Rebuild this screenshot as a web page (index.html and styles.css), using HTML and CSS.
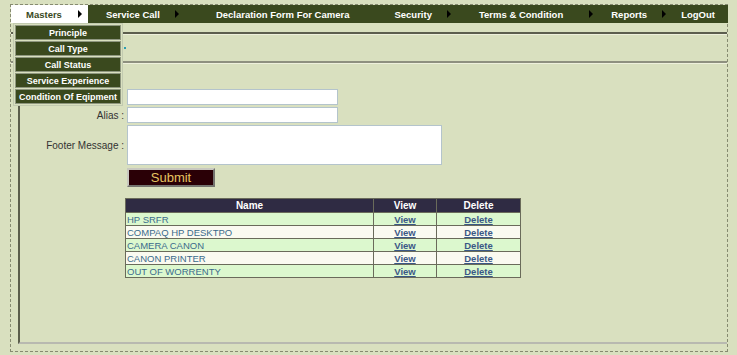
FILE: index.html
```html
<!DOCTYPE html>
<html lang="en">
<head>
  <meta charset="UTF-8" />
  <title>Principle</title>
  <link rel="stylesheet" href="styles.css">
</head>
<body>
  <div class="frame">
    <ul class="menubar">
      <li class="menu-item active">
        <span>Masters</span><span class="arrow"></span>
        <ul class="dropdown">
          <li>Principle</li>
          <li>Call Type</li>
          <li>Call Status</li>
          <li>Service Experience</li>
          <li>Condition Of Eqipment</li>
        </ul>
      </li>
      <li class="menu-item"><span>Service Call</span><span class="arrow"></span></li>
      <li class="menu-item"><span>Declaration Form For Camera</span></li>
      <li class="menu-item"><span>Security</span><span class="arrow"></span></li>
      <li class="menu-item"><span>Terms &amp; Condition</span><span class="arrow"></span></li>
      <li class="menu-item"><span>Reports</span><span class="arrow"></span></li>
      <li class="menu-item"><span>LogOut</span></li>
    </ul>

    <div class="rule rule-dark"></div>
    <div class="crumb"><span class="crumb-dot"></span></div>
    <div class="rule rule-grey"></div>

    <div class="panel">
      <div class="form-row">
        <span class="lbl"></span>
        <input type="text" class="txt" />
      </div>
      <div class="form-row">
        <label class="lbl">Alias :</label>
        <input type="text" class="txt" />
      </div>
      <div class="form-row">
        <label class="lbl">Footer Message :</label>
        <textarea class="area"></textarea>
      </div>
      <div class="form-row">
        <span class="lbl"></span>
        <button class="submit">Submit</button>
      </div>

      <table class="grid">
        <tr><th class="c-name">Name</th><th class="c-view">View</th><th class="c-del">Delete</th></tr>
        <tr class="odd"><td>HP SRFR</td><td class="lnk"><a href="#">View</a></td><td class="lnk"><a href="#">Delete</a></td></tr>
        <tr class="even"><td>COMPAQ HP DESKTPO</td><td class="lnk"><a href="#">View</a></td><td class="lnk"><a href="#">Delete</a></td></tr>
        <tr class="odd"><td>CAMERA CANON</td><td class="lnk"><a href="#">View</a></td><td class="lnk"><a href="#">Delete</a></td></tr>
        <tr class="even"><td>CANON PRINTER</td><td class="lnk"><a href="#">View</a></td><td class="lnk"><a href="#">Delete</a></td></tr>
        <tr class="odd"><td>OUT OF WORRENTY</td><td class="lnk"><a href="#">View</a></td><td class="lnk"><a href="#">Delete</a></td></tr>
      </table>
    </div>
  </div>
</body>
</html>
```

FILE: styles.css
```css
* { box-sizing: border-box; }
body {
  margin: 0;
  padding: 4px 0 0 10px;
  background-color: #d9e0bf;
  font-family: "Liberation Sans", Arial, sans-serif;
  font-size: 10px;
  color: #333;
}
.frame {
  width: 718px;
  height: 348px;
  border: 1px dashed #868a70;
}

/* top menu */
.menubar {
  list-style: none;
  margin: 0;
  padding: 0;
  height: 18px;
  display: flex;
  background-color: #3a491e;
  margin-right: -1px;
}
.menu-item {
  position: relative;
  display: flex;
  align-items: center;
  height: 18px;
  color: #fff;
  font-weight: bold;
  font-size: 9.5px;
}
.menu-item .arrow {
  width: 0;
  height: 0;
  margin-left: 15px;
  border-left: 4px solid #000;
  border-top: 4px solid transparent;
  border-bottom: 4px solid transparent;
}
.menu-item.active {
  width: 77px;
  padding-left: 15px;
  background: #fff;
  color: #3a491e;
}
.menu-item.active .arrow { margin-left: 16px; }
.menu-item:nth-child(2) { margin-left: 18px; }
.menu-item:nth-child(3) { margin-left: 37px; }
.menu-item:nth-child(4) { margin-left: 45px; }
.menu-item:nth-child(5) { margin-left: 28px; }
.menu-item:nth-child(6) { margin-left: 18px; }
.menu-item:nth-child(7) { margin-left: 15px; }
.menu-item:nth-child(6) .arrow { margin-left: 15px; }
.menu-item:nth-child(5) .arrow { margin-left: 26px; }

.dropdown {
  position: absolute;
  top: 18px;
  left: 2px;
  width: 110px;
  margin: 0;
  padding: 1px;
  list-style: none;
  background: #d9e0bf;
  border: 1px solid #c2cab0;
  z-index: 5;
}
.dropdown li {
  height: 15px;
  line-height: 14px;
  margin-bottom: 1px;
  background: #3a491e;
  border: 1px solid #8f9780;
  color: #fff;
  text-align: center;
  font-size: 9px;
  font-weight: bold;
  white-space: nowrap;
}
.dropdown li:last-child { margin-bottom: 0; }

/* separators */
.rule { height: 3px; }
.rule-dark {
  margin-top: 9px;
  border-top: 2px solid #5c5e4e;
  border-bottom: 1px solid #eef0dc;
}
.crumb {
  height: 26px;
  padding: 12px 0 0 113px;
}
.crumb-dot {
  display: block;
  width: 2px;
  height: 2px;
  background: #2a9cb0;
}
.rule-grey {
  border-top: 2px solid #8e907f;
  border-bottom: 1px solid #eef0dc;
}

/* form panel */
.panel {
  margin-left: 7px;
  height: 280px;
  padding-top: 25px;
  border-left: 2px solid #5b5e4b;
  border-bottom: 2px solid #b8b9b0;
}
.form-row {
  display: flex;
  align-items: center;
  margin-bottom: 2px;
}
.form-row:nth-child(3) { margin-bottom: 3px; }
.lbl {
  width: 104px;
  margin-right: 3px;
  text-align: right;
  font-size: 10px;
  color: #333;
}
.txt {
  width: 211px;
  height: 16px;
  margin: 0;
  border: 1px solid #b4c4cc;
  background: #fff;
}
.area {
  width: 315px;
  height: 40px;
  margin: 0;
  border: 1px solid #b4c4cc;
  background: #fff;
  resize: none;
}
.submit {
  width: 88px;
  height: 19px;
  padding: 0;
  background: #2a0006;
  color: #e5c561;
  border: 2px outset #c8c8c0;
  font-family: "Liberation Sans", Arial, sans-serif;
  font-size: 13px;
}

/* list table */
.grid {
  margin: 11px 0 0 105px;
  width: 396px;
  border-collapse: collapse;
  font-size: 9.5px;
}
.grid th {
  height: 14px;
  padding: 0;
  background: #2f2b43;
  color: #fff;
  font-weight: bold;
  font-size: 10px;
  border: 1px solid #6a6b5a;
}
.c-name { width: 248px; }
.c-view { width: 63px; }
.grid td {
  height: 13px;
  padding: 0 1px;
  line-height: 11px;
  color: #3b6b8c;
  border: 1px solid #6a6b5a;
}
.grid tr.odd td { background: #dcf8ce; }
.grid tr.even td { background: #fafaf0; }
.grid td.lnk { text-align: center; }
.grid td a {
  color: #3a5786;
  font-weight: bold;
  text-decoration: underline;
}
```
